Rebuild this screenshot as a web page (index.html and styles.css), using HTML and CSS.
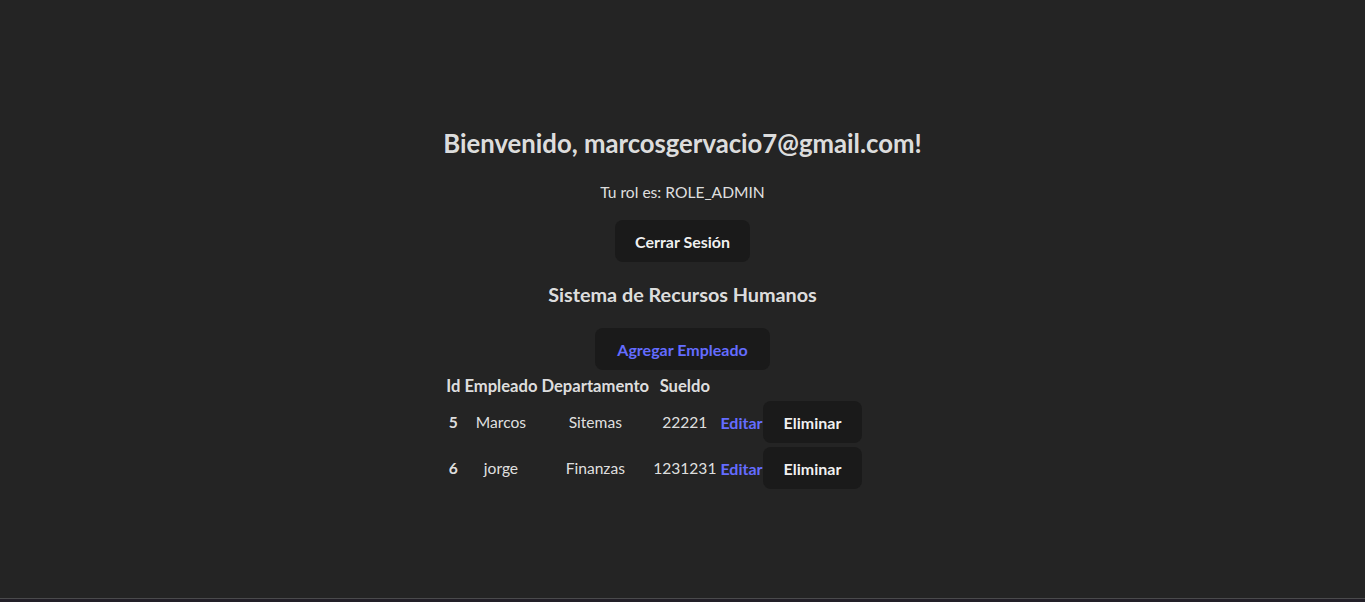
FILE: index.html
```html
<!DOCTYPE html>
<html lang="es">
<head>
<meta charset="utf-8">
<title>Sistema de Recursos Humanos</title>
<link rel="stylesheet" href="styles.css">
</head>
<body>
<div class="page">
  <main class="main">
    <div class="panel">
      <h2 class="welcome">Bienvenido, marcosgervacio7@gmail.com!</h2>
      <p class="role">Tu rol es: ROLE_ADMIN</p>
      <button class="btn">Cerrar Sesión</button>
      <h3 class="title">Sistema de Recursos Humanos</h3>
      <button class="btn btn-link">Agregar Empleado</button>
      <table class="table">
        <thead>
          <tr><th>Id</th><th>Empleado</th><th>Departamento</th><th>Sueldo</th><th></th></tr>
        </thead>
        <tbody>
          <tr><td class="id">5</td><td>Marcos</td><td>Sitemas</td><td>22221</td><td class="actions"><a class="link" href="#">Editar</a><button class="btn">Eliminar</button></td></tr>
          <tr><td class="id">6</td><td>jorge</td><td>Finanzas</td><td>1231231</td><td class="actions"><a class="link" href="#">Editar</a><button class="btn">Eliminar</button></td></tr>
        </tbody>
      </table>
    </div>
  </main>
  <div class="bottom-edge"></div>
</div>
</body>
</html>
```
FILE: styles.css
```css
html, body {
  margin: 0;
  padding: 0;
  background: #242424;
}
body {
  font-family: "Lato", "Open Sans", sans-serif;
  color: rgba(255, 255, 255, 0.87);
  font-size: 16px;
}
.page {
  height: 602px;
  display: flex;
  flex-direction: column;
}
.main {
  flex: 1;
  display: flex;
  justify-content: center;
  padding-top: 127px;
}
.panel {
  width: fit-content;
  text-align: center;
  display: flex;
  flex-direction: column;
  align-items: center;
}
.welcome {
  font-size: 25.7px;
  font-weight: 700;
  margin: 0;
  line-height: 32px;
}
.role {
  margin: 0;
  margin-top: 22px;
  line-height: 22px;
  font-size: 15.6px;
}
.btn {
  font-family: inherit;
  font-size: 16px;
  font-weight: 700;
  background: #1a1a1a;
  color: rgba(255, 255, 255, 0.95);
  border: 1px solid transparent;
  border-radius: 8px;
  padding: 0 19px;
  height: 42px;
  cursor: pointer;
}
.panel > .btn { margin-top: 17px; }
.btn-link { color: #646cff; }
.panel > .btn-link { margin-top: 22px; padding: 0 21.5px; }
.title {
  font-size: 19.8px;
  font-weight: 700;
  margin: 20px 0 0;
  line-height: 24px;
}
.table {
  align-self: flex-start;
  border-collapse: separate;
  border-spacing: 2px;
  margin-top: 2px;
}
.table th, .table td {
  padding: 1px;
  text-align: center;
}
.table th { font-weight: 700; line-height: 22px; font-size: 16.6px; }
.table td { line-height: 22px; font-size: 15.6px; }
.table td.id { font-weight: 700; }
.table td.actions { white-space: nowrap; }
.table td.actions .btn { padding: 0 20px; }
.link {
  color: #646cff;
  font-weight: 700;
  font-size: 16px;
  text-decoration: none;
}
.bottom-edge {
  height: 4px;
  border-top: 1px solid #4a4a4c;
  background: #221f27;
  box-sizing: border-box;
}
```
